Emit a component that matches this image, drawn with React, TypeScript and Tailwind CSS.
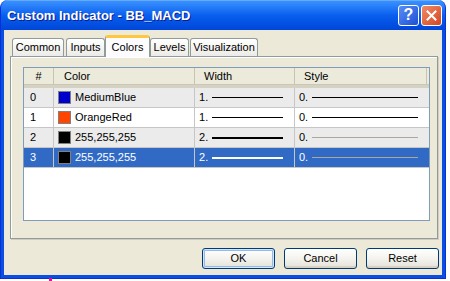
import React from "react";

const rows = [
  { id: "0", color: "#0000CD", name: "MediumBlue", width: 1, widthLine: "bg-black", styleLine: "bg-black" },
  { id: "1", color: "#FF4500", name: "OrangeRed", width: 1, widthLine: "bg-black", styleLine: "bg-black" },
  { id: "2", color: "#000000", name: "255,255,255", width: 2, widthLine: "bg-black", styleLine: "bg-[#ACA899]" },
  { id: "3", color: "#000000", name: "255,255,255", width: 2, widthLine: "bg-white", styleLine: "bg-[#ACA899]" },
];

const tabs = [
  { label: "Common", cls: "ml-[8px] w-[52px]" },
  { label: "Inputs", cls: "ml-[2px] w-[39px]" },
  { label: "Colors", cls: "w-[45px]", active: true },
  { label: "Levels", cls: "w-[39px]" },
  { label: "Visualization", cls: "ml-[1px] w-[68px]" },
];

const XpButton = ({ label, isDefault }: { label: string; isDefault?: boolean }) => (
  <button
    className={`w-[73px] h-[21px] rounded-[3px] border border-[#003C74] bg-gradient-to-b from-white via-[#F4F3EE] to-[#E3E1D7] text-[11px] text-black flex items-center justify-center ${
      isDefault ? "shadow-[inset_0_0_0_1px_#CEE7FF,inset_0_0_0_2px_#98B8EA]" : "shadow-[inset_0_-2px_0_#D8D2C6]"
    }`}
  >
    {label}
  </button>
);

export default function App() {
  return (
    <div className="w-[450px] h-[281px] bg-white relative font-['Liberation_Sans',Arial,sans-serif]">
      <div className="w-[446px] h-[279px] flex flex-col rounded-t-[8px] overflow-hidden bg-[#0A4FE0] border-x border-b border-[#0831D9]">
        {/* title bar */}
        <div className="h-[30px] shrink-0 flex items-center pl-[6px] pr-[3px] bg-gradient-to-b from-[#3D95FF] via-[#0A5FEF] to-[#0046D8] shadow-[inset_0_1px_0_#66AAFF]">
          <div className="flex-1 pt-[1px] text-white font-bold text-[13px] [text-shadow:1px_1px_0_#0F1C8A]">
            Custom Indicator - BB_MACD
          </div>
          <div className="w-[21px] h-[21px] rounded-[3px] border border-white bg-gradient-to-br from-[#5A8DF5] to-[#1D4FD6] flex items-center justify-center text-white font-bold text-[16px] leading-none">
            ?
          </div>
          <div className="ml-[2px] w-[21px] h-[21px] rounded-[3px] border border-white bg-gradient-to-br from-[#F08A66] to-[#D2441F] flex items-center justify-center">
            <svg width="11" height="11" viewBox="0 0 11 11">
              <path d="M1.5 1.5 L9.5 9.5 M9.5 1.5 L1.5 9.5" stroke="white" strokeWidth="2" strokeLinecap="square" />
            </svg>
          </div>
        </div>

        {/* body */}
        <div className="flex-1 mx-[3px] mb-[3px] bg-[#ECE9D8] flex flex-col text-[11px] text-black">
          {/* tabs */}
          <div className="h-[26px] flex items-end relative z-10">
            {tabs.map((t) =>
              t.active ? (
                <div
                  key={t.label}
                  className={`${t.cls} h-[22px] -mb-[1px] bg-[#FCFCFE] border-x border-[#919B9C] border-t-[3px] border-t-[#FFC83C] rounded-t-[3px] flex items-start justify-center pt-[1px]`}
                >
                  {t.label}
                </div>
              ) : (
                <div
                  key={t.label}
                  className={`${t.cls} h-[18px] bg-gradient-to-b from-white to-[#ECEBE6] border-x border-t border-[#919B9C] rounded-t-[3px] flex items-center justify-center`}
                >
                  {t.label}
                </div>
              )
            )}
          </div>

          {/* panel */}
          <div className="ml-[6px] w-[428px] h-[183px] border border-[#919B9C] shadow-[inset_1px_1px_0_#FFFFFF,1px_1px_0_#D0CDBF] pt-[10px] pl-[12px]">
            <div className="w-[407px] h-[154px] border border-[#7F9DB9] bg-white flex flex-col">
              {/* header */}
              <div className="h-[20px] shrink-0 flex bg-[#EBEADB] border-b-[3px] border-[#D6D2C2] shadow-[inset_0_-1px_0_#CBC7B8]">
                <div className="w-[30px] flex items-center justify-center border-r border-[#C7C5B2]">#</div>
                <div className="w-[141px] flex items-center pl-[10px] border-r border-[#C7C5B2]">Color</div>
                <div className="w-[100px] flex items-center pl-[9px] border-r border-[#C7C5B2]">Width</div>
                <div className="w-[132px] flex items-center pl-[9px] border-r border-[#C7C5B2]">Style</div>
              </div>
              {rows.map((r, i) => {
                const selected = i === 3;
                const bg = selected ? "bg-[#316AC5] text-white" : i % 2 === 0 ? "bg-[#EBEBEB]" : "bg-white";
                return (
                  <div key={r.id} className={`h-[20px] shrink-0 flex border-b border-[#C6C6C6] ${bg}`}>
                    <div className="w-[30px] flex items-center pl-[6px] border-r border-[#C6C6C6]">{r.id}</div>
                    <div className="w-[141px] flex items-center pl-[4px] border-r border-[#C6C6C6]">
                      <div className="w-[13px] h-[13px] border border-[#808080]" style={{ backgroundColor: r.color }} />
                      <span className="ml-[4px]">{r.name}</span>
                    </div>
                    <div className="w-[100px] flex items-center pl-[4px] border-r border-[#C6C6C6]">
                      <span className="w-[13px]">{r.width}.</span>
                      <div className={`w-[71px] ${r.width === 2 ? "h-[2px]" : "h-[1px]"} ${r.widthLine}`} />
                    </div>
                    <div className="w-[132px] flex items-center pl-[4px]">
                      <span className="w-[13px]">0.</span>
                      <div className={`w-[106px] h-[1px] ${r.styleLine}`} />
                    </div>
                  </div>
                );
              })}
            </div>
          </div>

          {/* buttons */}
          <div className="mt-[9px] ml-[198px] flex gap-[9px]">
            <XpButton label="OK" isDefault />
            <XpButton label="Cancel" />
            <XpButton label="Reset" />
          </div>
        </div>
      </div>
      <div className="absolute left-[49px] top-[278px] w-[3px] h-[3px] bg-[#E0108F]" />
    </div>
  );
}
